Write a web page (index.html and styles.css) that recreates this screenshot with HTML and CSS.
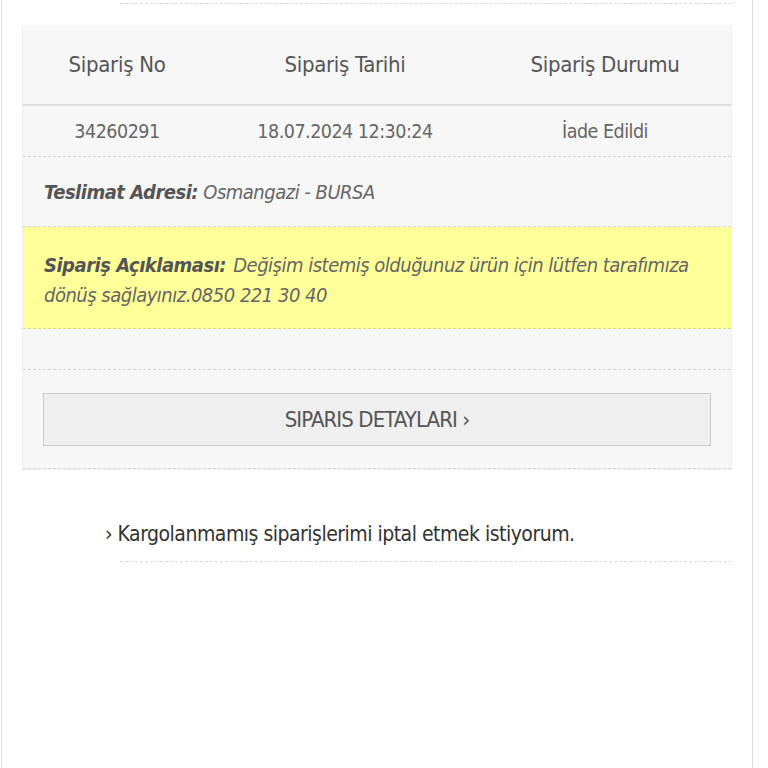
FILE: index.html
```html
<!DOCTYPE html>
<html lang="tr">
<head>
<meta charset="utf-8">
<title>Siparişlerim</title>
<link rel="stylesheet" href="styles.css">
</head>
<body>
<div class="page">
  <div class="prev-item"></div>
  <div class="order-card">
    <div class="order-head">
      <div class="col">Sipariş No</div>
      <div class="col">Sipariş Tarihi</div>
      <div class="col">Sipariş Durumu</div>
    </div>
    <div class="order-row">
      <div class="col">34260291</div>
      <div class="col">18.07.2024 12:30:24</div>
      <div class="col">İade Edildi</div>
    </div>
    <div class="order-info"><b>Teslimat Adresi:</b>&nbsp;Osmangazi - BURSA</div>
    <div class="order-info note"><b>Sipariş Açıklaması:</b> Değişim istemiş olduğunuz ürün için lütfen tarafımıza dönüş sağlayınız.0850 221 30 40</div>
    <div class="order-empty"></div>
    <div class="order-actions">
      <a class="detail-btn" href="#">SIPARIS DETAYLARI ›</a>
    </div>
  </div>
  <a class="cancel-link" href="#">› Kargolanmamış siparişlerimi iptal etmek istiyorum.</a>
</div>
</body>
</html>
```
FILE: styles.css
```css
html, body {
  margin: 0;
  padding: 0;
  background: #fff;
}
body {
  font-family: "DejaVu Sans Condensed", "Liberation Sans", sans-serif;
  color: #555;
}
.page {
  box-sizing: border-box;
  width: 752px;
  min-height: 768px;
  margin-left: 1px;
  padding: 0 20px;
  border-left: 1px solid #e2e2e2;
  border-right: 1px solid #dcdcdc;
  display: flex;
  flex-direction: column;
}
.prev-item {
  margin-left: 98px;
  height: 3px;
  border-bottom: 1px dashed #d8d8d8;
}
.order-card {
  margin-top: 21px;
  background: #f7f7f7;
  border: 1px solid #efefef;
  border-top: none;
}
.order-head, .order-row {
  display: grid;
  grid-template-columns: 188px 268px 1fr;
  align-items: center;
  text-align: center;
}
.order-head {
  height: 79px;
  border-bottom: 2px solid #dcdcdc;
  font-size: 22px;
  letter-spacing: -0.3px;
  color: #555;
}
.order-row {
  height: 50px;
  border-bottom: 1px dashed #d6d6d6;
  font-size: 19.5px;
  letter-spacing: -0.5px;
  color: #666;
}
.order-info {
  padding: 0 21px;
  height: 69px;
  display: flex;
  align-items: center;
  border-bottom: 1px dashed #d6d6d6;
  font-size: 20px;
  letter-spacing: -0.5px;
  font-style: italic;
  color: #666;
}
.order-info b {
  color: #555;
}
.order-info.note {
  display: block;
  height: auto;
  padding: 23px 21px 18px;
  line-height: 30px;
  background: #ffff99;
  border-bottom-color: #d8d89c;
}
.order-info.note b {
  margin-right: 2px;
}
.order-empty {
  height: 40px;
  border-bottom: 1px dashed #d6d6d6;
}
.order-actions {
  padding: 23px 20px 22px;
  border-bottom: 1px dashed #d6d6d6;
}
.detail-btn {
  display: flex;
  align-items: center;
  justify-content: center;
  height: 51px;
  background: #efefef;
  border: 1px solid #c9c9c9;
  color: #555;
  font-size: 22px;
  letter-spacing: -0.9px;
  text-decoration: none;
}
.cancel-link {
  margin: 52px 0 0 98px;
  padding-bottom: 15px;
  border-bottom: 1px dashed #d8d8d8;
  text-indent: -15px;
  font-size: 21px;
  letter-spacing: -0.5px;
  color: #333;
  text-decoration: none;
}
```
